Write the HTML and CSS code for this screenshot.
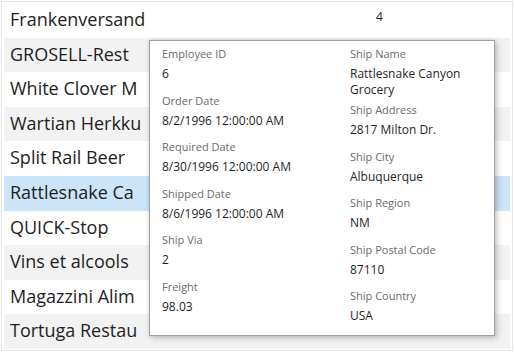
FILE: index.html
```html
<!DOCTYPE html>
<html lang="en">
<head>
<meta charset="utf-8">
<title>Orders</title>
<link rel="stylesheet" href="styles.css">
</head>
<body>
<div class="list">
  <div class="row"><span class="name">Frankenversand</span><span class="num">4</span></div>
  <div class="row alt"><span class="name"><span class="clip">GROSELL-Rest</span></span><span class="num"></span></div>
  <div class="row"><span class="name"><span class="clip">White Clover M</span></span><span class="num"></span></div>
  <div class="row alt"><span class="name"><span class="clip">Wartian Herkku</span></span><span class="num"></span></div>
  <div class="row"><span class="name"><span class="clip">Split Rail Beer</span></span><span class="num"></span></div>
  <div class="row selected"><span class="name"><span class="clip">Rattlesnake Ca</span></span><span class="num"></span></div>
  <div class="row"><span class="name"><span class="clip">QUICK-Stop</span></span><span class="num"></span></div>
  <div class="row alt"><span class="name"><span class="clip">Vins et alcools</span></span><span class="num"></span></div>
  <div class="row"><span class="name"><span class="clip">Magazzini Alim</span></span><span class="num"></span></div>
  <div class="row alt"><span class="name"><span class="clip">Tortuga Restau</span></span><span class="num"></span></div>

  <div class="popup">
    <div class="col">
      <div class="field"><div class="label">Employee ID</div><div class="value">6</div></div>
      <div class="field"><div class="label">Order Date</div><div class="value">8/2/1996 12:00:00 AM</div></div>
      <div class="field"><div class="label">Required Date</div><div class="value">8/30/1996 12:00:00 AM</div></div>
      <div class="field"><div class="label">Shipped Date</div><div class="value">8/6/1996 12:00:00 AM</div></div>
      <div class="field"><div class="label">Ship Via</div><div class="value">2</div></div>
      <div class="field"><div class="label">Freight</div><div class="value">98.03</div></div>
    </div>
    <div class="col">
      <div class="field"><div class="label">Ship Name</div><div class="value">Rattlesnake Canyon Grocery</div></div>
      <div class="field"><div class="label">Ship Address</div><div class="value">2817 Milton Dr.</div></div>
      <div class="field"><div class="label">Ship City</div><div class="value">Albuquerque</div></div>
      <div class="field"><div class="label">Ship Region</div><div class="value">NM</div></div>
      <div class="field"><div class="label">Ship Postal Code</div><div class="value">87110</div></div>
      <div class="field"><div class="label">Ship Country</div><div class="value">USA</div></div>
    </div>
  </div>
</div>
</body>
</html>
```

FILE: styles.css
```css
html, body {
  margin: 0;
  padding: 0;
  background: #ffffff;
}

body {
  font-family: "Open Sans", "Noto Sans", sans-serif;
  color: #1f1f1f;
}

.list {
  position: relative;
  margin: 1px;
  border: 1px solid #e4e4e4;
  padding: 1px 2px 2px 2px;
  height: 350px;
  box-sizing: border-box;
  background: #ffffff;
}

.row {
  display: grid;
  grid-template-columns: 366px 1fr;
  height: 34.6px;
  box-sizing: border-box;
  background: #ffffff;
}

.row.alt {
  background: #f2f2f2;
}

.row.selected {
  background: #cce4f7;
}

.name {
  padding-left: 6px;
  font-size: 18px;
  line-height: 33.6px;
  white-space: nowrap;
  overflow: hidden;
  color: #1e1e1e;
}

.clip {
  display: inline-block;
  max-width: 139px;
  overflow: hidden;
  vertical-align: top;
}

.num {
  padding-left: 6px;
  padding-top: 6px;
  font-size: 12px;
  line-height: 16px;
  color: #1e1e1e;
}

.popup {
  position: absolute;
  left: 147px;
  top: 38px;
  width: 346px;
  box-sizing: border-box;
  background: #ffffff;
  border: 1px solid #a0a0a0;
  box-shadow: 2px 2px 6px rgba(0, 0, 0, 0.22), 0 0 4px rgba(0, 0, 0, 0.08);
  padding: 5px 12px 0 12px;
  display: grid;
  grid-template-columns: 188px 1fr;
}

.field {
  min-height: 46.5px;
  padding-bottom: 4px;
  box-sizing: border-box;
}

.label {
  font-size: 11px;
  line-height: 16px;
  color: #6b6b6b;
}

.value {
  margin-top: 4px;
  font-size: 12px;
  line-height: 16px;
  color: #1f1f1f;
}
```
